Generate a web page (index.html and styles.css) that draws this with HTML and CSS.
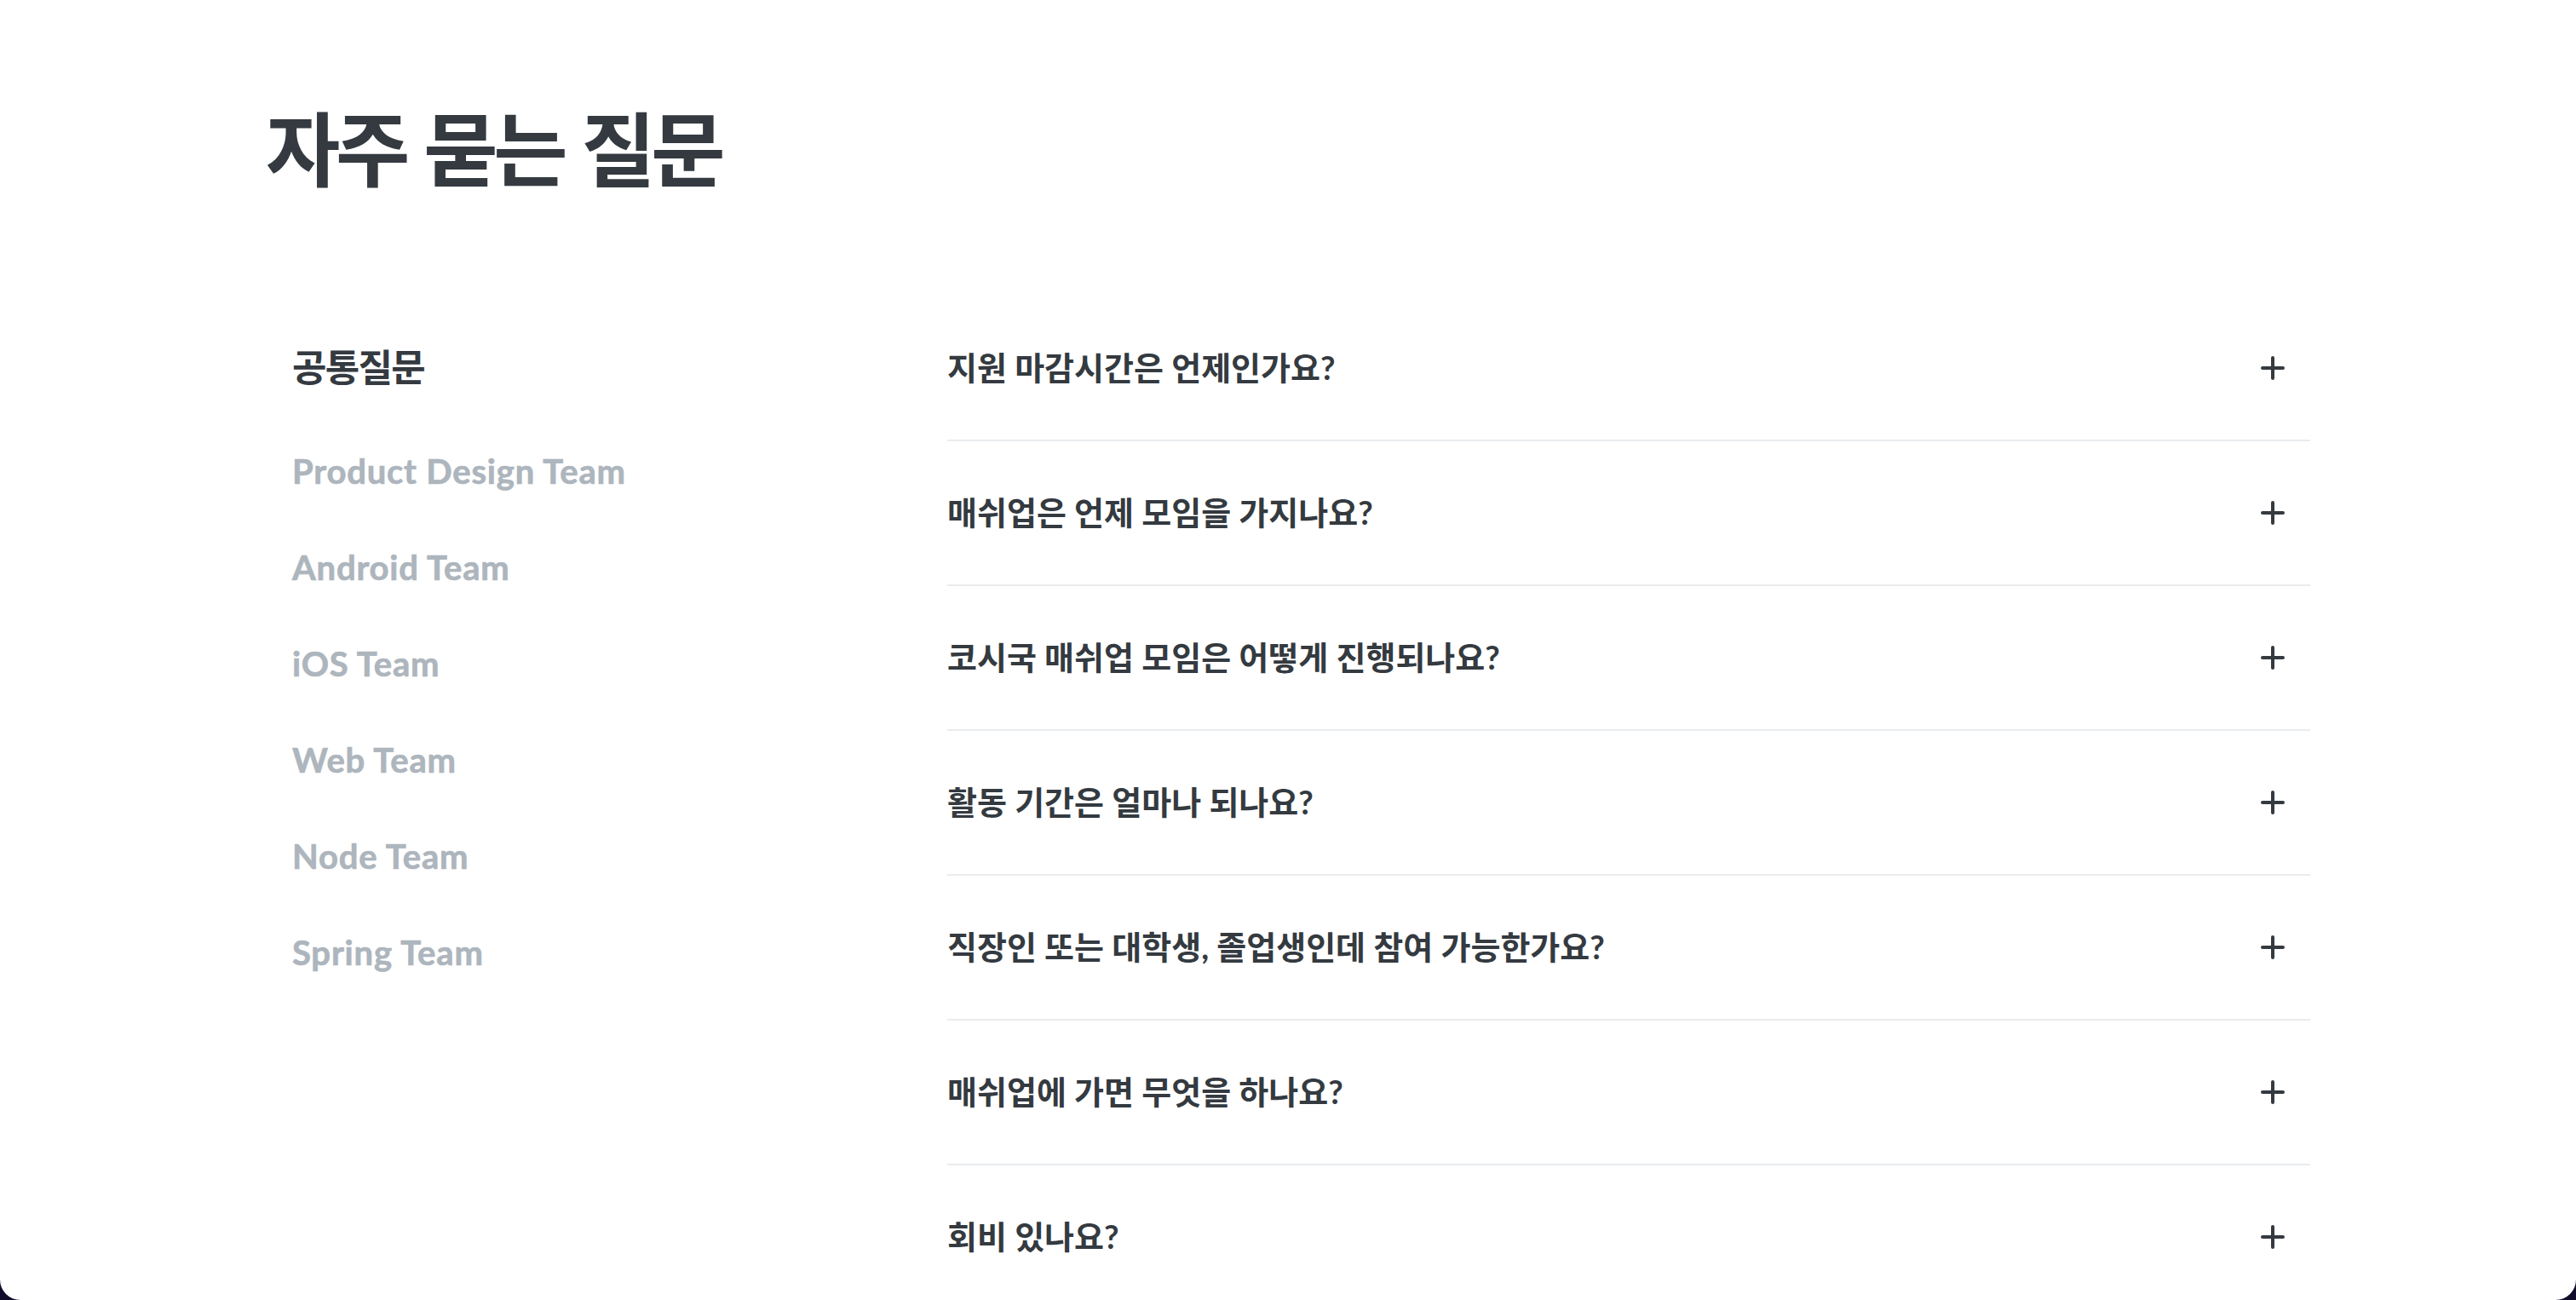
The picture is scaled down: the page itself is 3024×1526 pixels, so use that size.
FILE: index.html
```html
<!DOCTYPE html>
<html lang="ko">
<head>
<meta charset="utf-8">
<title>자주 묻는 질문</title>
<link rel="stylesheet" href="styles.css">
</head>
<body>
<div class="page">
  <div class="container">
    <h1 class="title">자주 묻는 질문</h1>
    <div class="faq">
      <nav class="tabs">
        <a class="tab active">공통질문</a>
        <a class="tab">Product Design Team</a>
        <a class="tab">Android Team</a>
        <a class="tab">iOS Team</a>
        <a class="tab">Web Team</a>
        <a class="tab">Node Team</a>
        <a class="tab">Spring Team</a>
      </nav>
      <ul class="questions">
        <li class="q"><span class="q-text">지원 마감시간은 언제인가요?</span><svg class="plus" viewBox="0 0 28 28"><path d="M14 2v24M2 14h24"/></svg></li>
        <li class="q"><span class="q-text">매쉬업은 언제 모임을 가지나요?</span><svg class="plus" viewBox="0 0 28 28"><path d="M14 2v24M2 14h24"/></svg></li>
        <li class="q"><span class="q-text">코시국 매쉬업 모임은 어떻게 진행되나요?</span><svg class="plus" viewBox="0 0 28 28"><path d="M14 2v24M2 14h24"/></svg></li>
        <li class="q"><span class="q-text">활동 기간은 얼마나 되나요?</span><svg class="plus" viewBox="0 0 28 28"><path d="M14 2v24M2 14h24"/></svg></li>
        <li class="q"><span class="q-text">직장인 또는 대학생, 졸업생인데 참여 가능한가요?</span><svg class="plus" viewBox="0 0 28 28"><path d="M14 2v24M2 14h24"/></svg></li>
        <li class="q"><span class="q-text">매쉬업에 가면 무엇을 하나요?</span><svg class="plus" viewBox="0 0 28 28"><path d="M14 2v24M2 14h24"/></svg></li>
        <li class="q"><span class="q-text">회비 있나요?</span><svg class="plus" viewBox="0 0 28 28"><path d="M14 2v24M2 14h24"/></svg></li>
      </ul>
    </div>
  </div>
</div>
</body>
</html>
```

FILE: styles.css
```css
html, body {
  margin: 0;
  padding: 0;
  background: #100c2a;
  overflow: hidden;
}

.page {
  height: 1526px;
  background: #ffffff;
  border-radius: 0 0 24px 24px;
  overflow: hidden;
  font-family: "Lato", "Noto Sans CJK KR", sans-serif;
  color: #343a40;
}

.container {
  width: 2400px;
  margin: 0 auto;
  padding-top: 123px;
}

.title {
  margin: 0;
  font-family: "Noto Sans CJK KR", sans-serif;
  font-size: 95px;
  line-height: 1;
  font-weight: 700;
  letter-spacing: -0.057em;
  color: #343a40;
}

.faq {
  display: grid;
  grid-template-columns: 800px 1600px;
  margin-top: 130px;
  align-items: start;
}

.tabs {
  display: flex;
  flex-direction: column;
  gap: 65px;
  padding-top: 55px;
  padding-left: 31px;
}

.tab {
  font-family: "Lato", sans-serif;
  font-size: 40px;
  line-height: 1.2;
  font-weight: 700;
  letter-spacing: 0.02em;
  color: #adb5bd;
  -webkit-text-stroke: 0.7px #adb5bd;
  cursor: pointer;
}

.tab.active {
  font-family: "Noto Sans CJK KR", sans-serif;
  font-size: 44px;
  font-weight: 700;
  letter-spacing: -0.04em;
  color: #343a40;
  -webkit-text-stroke: 0;
  margin-bottom: 8px;
}

.questions {
  list-style: none;
  margin: 0;
  padding: 0;
}

.q {
  height: 168px;
  border-bottom: 2px solid #e9ecef;
  display: flex;
  align-items: center;
  justify-content: space-between;
  padding-right: 30px;
}

.q-text {
  font-size: 38px;
  font-weight: 700;
  letter-spacing: 0;
  line-height: 1.2;
  color: #343a40;
}

.plus {
  width: 28px;
  height: 28px;
  flex: none;
  fill: none;
  stroke: #343a40;
  stroke-width: 4;
  stroke-linecap: round;
}
```
